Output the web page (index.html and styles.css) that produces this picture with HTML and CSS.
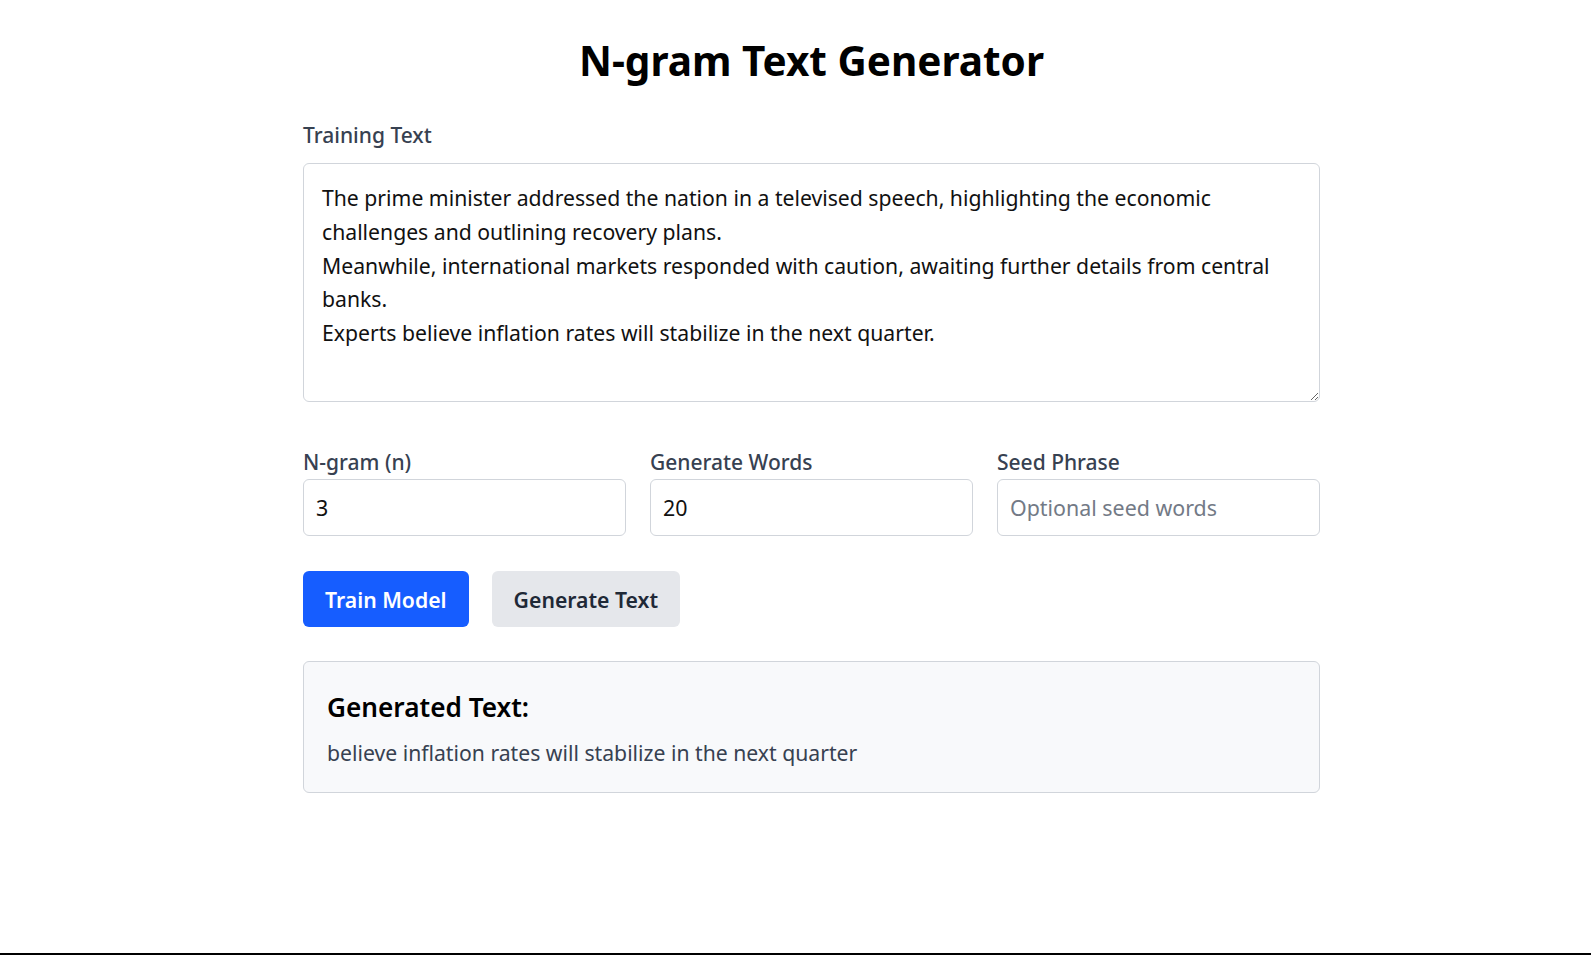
FILE: index.html
```html
<!DOCTYPE html>
<html lang="en">
<head>
<meta charset="utf-8">
<title>N-gram Text Generator</title>
<link rel="stylesheet" href="styles.css">
</head>
<body>
<main class="container">
  <h1 class="title">N-gram Text Generator</h1>
  <div class="field">
    <label class="label label-main" for="training">Training Text</label>
    <textarea id="training" class="textarea">The prime minister addressed the nation in a televised speech, highlighting the economic challenges and outlining recovery plans.
Meanwhile, international markets responded with caution, awaiting further details from central banks.
Experts believe inflation rates will stabilize in the next quarter.</textarea>
  </div>
  <div class="row">
    <div class="col">
      <label class="label" for="n">N-gram (n)</label>
      <input id="n" class="input" type="text" value="3">
    </div>
    <div class="col">
      <label class="label" for="words">Generate Words</label>
      <input id="words" class="input" type="text" value="20">
    </div>
    <div class="col">
      <label class="label" for="seed">Seed Phrase</label>
      <input id="seed" class="input" type="text" placeholder="Optional seed words">
    </div>
  </div>
  <div class="actions">
    <button class="btn btn-primary" type="button">Train Model</button>
    <button class="btn btn-secondary" type="button">Generate Text</button>
  </div>
  <section class="result">
    <h3 class="result-title">Generated Text:</h3>
    <p class="result-text">believe inflation rates will stabilize in the next quarter</p>
  </section>
</main>
</body>
</html>
```

FILE: styles.css
```css
* {
  box-sizing: border-box;
}

html {
  background: #ffffff;
}

body {
  margin: 0;
  min-height: 100vh;
  padding: 36px 0 0 32px;
  border-bottom: 2px solid #000000;
  font-family: "Noto Sans", "Open Sans", sans-serif;
  color: #111111;
}

.container {
  width: 1017px;
  margin: 0 auto;
  display: flex;
  flex-direction: column;
}

.title {
  margin: 0 0 34px;
  font-size: 40.5px;
  line-height: 50px;
  font-weight: 700;
  text-align: center;
  color: #000000;
}

.field {
  display: flex;
  flex-direction: column;
}

.label {
  display: block;
  font-size: 21px;
  line-height: 30px;
  font-weight: 500;
  color: #374151;
  margin-bottom: 2px;
}

.label-main {
  margin-bottom: 13px;
}

.textarea {
  display: block;
  width: 100%;
  height: 239px;
  padding: 17px 18px;
  border: 1px solid #d1d5db;
  border-radius: 6px;
  font-family: inherit;
  font-size: 21.2px;
  line-height: 33.75px;
  color: #111111;
  background: #ffffff;
  resize: vertical;
  outline: none;
}

.row {
  display: grid;
  grid-template-columns: repeat(3, 1fr);
  gap: 24px;
  margin-top: 45px;
}

.col {
  display: flex;
  flex-direction: column;
}

.input {
  width: 100%;
  height: 57px;
  padding: 0 12px;
  border: 1px solid #d1d5db;
  border-radius: 6px;
  font-family: inherit;
  font-size: 21.4px;
  color: #111111;
  background: #ffffff;
  outline: none;
}

.input::placeholder {
  color: #737a86;
}

.actions {
  display: flex;
  gap: 23px;
  margin-top: 35px;
}

.btn {
  height: 56px;
  padding: 0 22px;
  border: none;
  border-radius: 6px;
  font-family: inherit;
  font-size: 21.2px;
  font-weight: 600;
  cursor: pointer;
}

.btn-primary {
  background: #165dff;
  color: #ffffff;
}

.btn-secondary {
  background: #e5e7eb;
  color: #1f2937;
}

.result {
  margin-top: 34px;
  padding: 27px 23px 22px;
  border: 1px solid #d1d5db;
  border-radius: 6px;
  background: #f8f9fb;
}

.result-title {
  margin: 0 0 11px;
  font-size: 26.2px;
  line-height: 36px;
  font-weight: 600;
  color: #000000;
}

.result-text {
  margin: 0;
  font-size: 21.2px;
  line-height: 33.75px;
  color: #374151;
}
```
